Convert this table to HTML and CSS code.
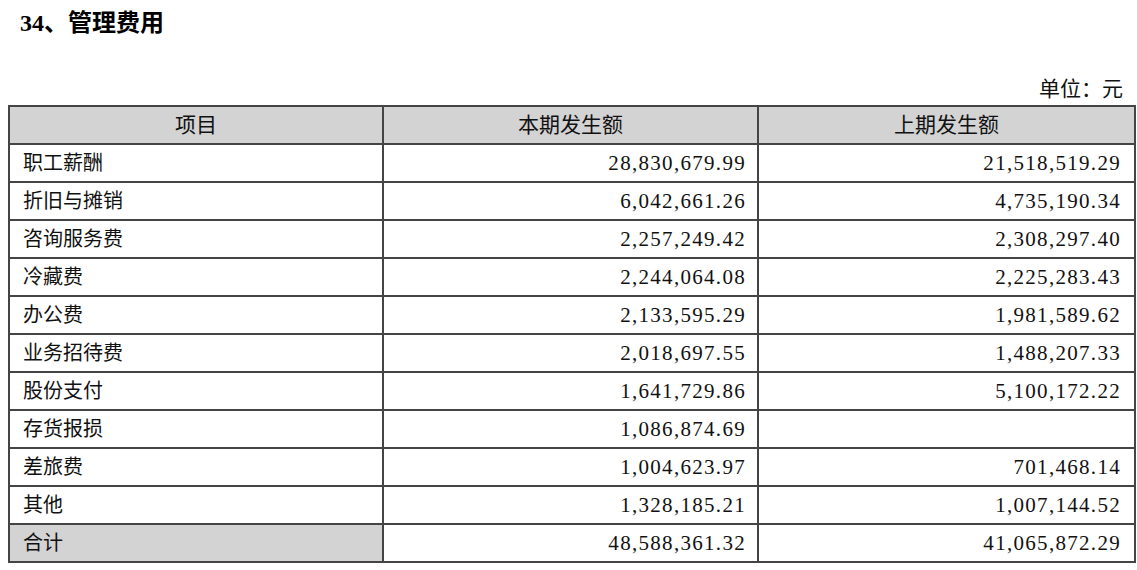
FILE: index.html
```html
<!DOCTYPE html>
<html lang="zh-CN">
<head>
<meta charset="utf-8">
<title>管理费用</title>
<link rel="stylesheet" href="styles.css">
</head>
<body>
<div class="page">
  <h1 class="title">34、管理费用</h1>
  <div class="unit">单位：元</div>
  <table class="fee-table">
    <colgroup>
      <col class="c1"><col class="c2"><col class="c3">
    </colgroup>
    <thead>
      <tr><th>项目</th><th>本期发生额</th><th>上期发生额</th></tr>
    </thead>
    <tbody>
      <tr><td class="item">职工薪酬</td><td class="num">28,830,679.99</td><td class="num">21,518,519.29</td></tr>
      <tr><td class="item">折旧与摊销</td><td class="num">6,042,661.26</td><td class="num">4,735,190.34</td></tr>
      <tr><td class="item">咨询服务费</td><td class="num">2,257,249.42</td><td class="num">2,308,297.40</td></tr>
      <tr><td class="item">冷藏费</td><td class="num">2,244,064.08</td><td class="num">2,225,283.43</td></tr>
      <tr><td class="item">办公费</td><td class="num">2,133,595.29</td><td class="num">1,981,589.62</td></tr>
      <tr><td class="item">业务招待费</td><td class="num">2,018,697.55</td><td class="num">1,488,207.33</td></tr>
      <tr><td class="item">股份支付</td><td class="num">1,641,729.86</td><td class="num">5,100,172.22</td></tr>
      <tr><td class="item">存货报损</td><td class="num">1,086,874.69</td><td class="num"></td></tr>
      <tr><td class="item">差旅费</td><td class="num">1,004,623.97</td><td class="num">701,468.14</td></tr>
      <tr><td class="item">其他</td><td class="num">1,328,185.21</td><td class="num">1,007,144.52</td></tr>
      <tr class="total"><td class="item shaded">合计</td><td class="num">48,588,361.32</td><td class="num">41,065,872.29</td></tr>
    </tbody>
  </table>
</div>
</body>
</html>
```

FILE: styles.css
```css
html, body {
  margin: 0;
  padding: 0;
  background: #ffffff;
}

body {
  font-family: "Liberation Serif", "Noto Sans CJK SC", serif;
  color: #111;
}

.page {
  padding: 0 3px 0 8px;
}

.title {
  margin: 0;
  padding: 8px 0 0 12px;
  height: 32px;
  font-size: 24px;
  line-height: 30px;
  font-weight: bold;
  color: #000;
}

.unit {
  margin-top: 37px;
  height: 28px;
  padding-right: 11px;
  text-align: right;
  font-size: 21px;
  line-height: 24px;
}

.fee-table {
  width: 1126px;
  border-collapse: collapse;
  table-layout: fixed;
  font-size: 20px;
}

.c1 { width: 374px; }
.c2 { width: 375px; }
.c3 { width: 377px; }

.fee-table th,
.fee-table td {
  border: 2px solid #444;
  height: 36px;
  padding: 0 12px;
  line-height: 24px;
  vertical-align: middle;
}

.fee-table th {
  background: #d3d3d3;
  font-weight: normal;
  font-size: 21px;
  text-align: center;
}

.fee-table td.item {
  text-align: left;
  padding-left: 13px;
}

.fee-table td.num {
  text-align: right;
  font-size: 21px;
  letter-spacing: 1.3px;
  padding-right: 11px;
}

.fee-table tr td.num:last-child {
  padding-right: 13px;
}

.fee-table td.shaded {
  background: #d3d3d3;
}
```
